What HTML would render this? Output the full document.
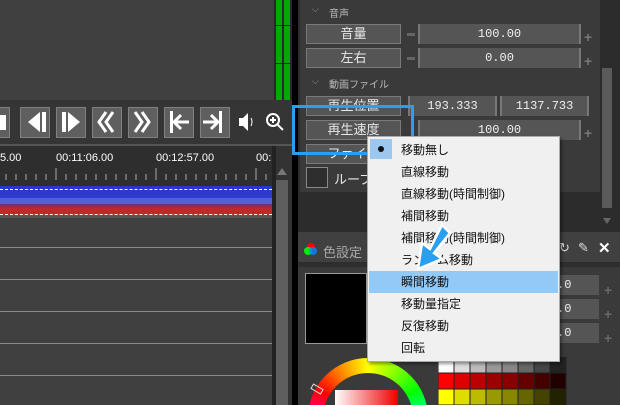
<!DOCTYPE html>
<html style="overflow:hidden;height:405px"><head><meta charset="utf-8"><style>
*{margin:0;padding:0;box-sizing:border-box}
html,body{width:620px;height:405px;overflow:hidden}
body{background:#404040;font-family:"Liberation Sans","Noto Sans CJK JP",sans-serif}
#w{position:relative;width:620px;height:405px;overflow:hidden;background:#404040}
.a{position:absolute}
.btn{position:absolute;width:30px;height:31px;background:#5f5f5f;border:1px solid #808080;top:107px}
.lbl{position:absolute;background:#555;border:1px solid #7a7a7a;color:#e8e8e8;font-size:13px;text-align:center;line-height:18px;height:20px}
.val{position:absolute;background:#555;color:#f0f0f0;font-family:"Liberation Mono",monospace;font-size:12px;text-align:center;line-height:20px;height:20px;border-left:2px solid #777;border-right:2px solid #777}
.mi{position:absolute;left:33px;font-size:12px;color:#111;height:22px;line-height:22px}
.h{position:absolute;color:#bbb;font-size:10px}
</style></head><body><div id="w">
<div class="a" style="left:274px;top:0;width:18px;height:100px;background:#2a2a2a"></div>
<div class="a" style="left:276px;top:0;width:6px;height:100px;background:#0a0"></div>
<div class="a" style="left:284px;top:0;width:6px;height:100px;background:#0a0"></div>
<div class="a" style="left:276px;top:25px;width:14px;height:1px;background:#222"></div>
<div class="a" style="left:276px;top:63px;width:14px;height:1px;background:#222"></div>
<div class="a" style="left:292px;top:0;width:6px;height:405px;background:#000"></div>
<div class="a" style="left:0;top:100px;width:292px;height:46px;background:#353535"></div>
<div class="a" style="left:0;top:144px;width:292px;height:2px;background:#555"></div>
<div class="btn" style="left:-20px"></div>
<div class="a" style="left:0;top:115px;width:6px;height:15px;background:#fff"></div>
<div class="btn" style="left:20px"></div><div class="btn" style="left:56px"></div><div class="btn" style="left:92px"></div><div class="btn" style="left:128px"></div><div class="btn" style="left:164px"></div><div class="btn" style="left:200px"></div>
<svg class="a" style="left:0;top:100px" width="292" height="46">
<g fill="#fff" stroke="#fff">
<polygon points="28,22 40,12 40,32" stroke="none"/><rect x="42" y="12" width="4" height="20" stroke="none"/>
<rect x="62" y="12" width="4" height="20" stroke="none"/><polygon points="68,12 80,22 68,32" stroke="none"/>
<path d="M106,12 L99,22 L106,32 M113,12 L106,22 L113,32" fill="none" stroke-width="3"/>
<path d="M135,12 L142,22 L135,32 M142,12 L149,22 L142,32" fill="none" stroke-width="3"/>
<rect x="170" y="11" width="3" height="22" stroke="none"/><path d="M175,22 H189 M181,15 L174,22 L181,29" fill="none" stroke-width="3"/>
<rect x="219" y="11" width="3" height="22" stroke="none"/><path d="M203,22 H217 M211,15 L218,22 L211,29" fill="none" stroke-width="3"/>
<polygon points="239,18 243,18 248,13 248,31 243,26 239,26" stroke="none"/>
<path d="M251,18 Q253,22 251,26" fill="none" stroke-width="1"/>
<circle cx="273" cy="20" r="6" fill="none" stroke-width="2"/><path d="M277,24 L283,30 M270,20 H276 M273,17 V23" fill="none" stroke-width="2"/>
</g></svg>
<div class="a" style="left:0;top:146px;width:272px;height:40px;background:#2e2e2e"></div>
<div class="a" style="left:0;top:152px;color:#fff;font-size:11px;width:272px;white-space:nowrap">
<span class="a" style="left:0">5.00</span><span class="a" style="left:56px">00:11:06.00</span><span class="a" style="left:156px">00:12:57.00</span><span class="a" style="left:256px">00:</span></div>
<svg class="a" style="left:0;top:168px" width="272" height="18"><g stroke="#aaa">
<path d="M56,0V12 M156,0V12 M256,0V12 M6,6V12 M16,6V12 M26,6V12 M36,6V12 M46,6V12 M66,6V12 M76,6V12 M86,6V12 M96,6V12 M106,6V12 M116,6V12 M126,6V12 M136,6V12 M146,6V12 M166,6V12 M176,6V12 M186,6V12 M196,6V12 M206,6V12 M216,6V12 M226,6V12 M236,6V12 M246,6V12 M266,6V12"/></g></svg>
<div class="a" style="left:0;top:186px;width:272px;height:30px;background:linear-gradient(#2b36c8 0,#3040d0 55%,#8a2a5a 65%,#c0282a 75%,#c02a2a 100%)"></div>
<div class="a" style="left:0;top:198px;width:272px;height:6px;background:rgba(120,130,220,.5)"></div>
<div class="a" style="left:0;top:189px;width:272px;border-top:1px dashed #fff"></div>
<div class="a" style="left:0;top:214px;width:272px;border-top:1px dashed #fff"></div>
<div class="a" style="left:0;top:216px;width:272px;height:2px;background:#555"></div>
<div class="a" style="left:0;top:247px;width:272px;height:1px;background:#8a8a8a"></div>
<div class="a" style="left:0;top:279px;width:272px;height:1px;background:#8a8a8a"></div>
<div class="a" style="left:0;top:311px;width:272px;height:1px;background:#8a8a8a"></div>
<div class="a" style="left:0;top:343px;width:272px;height:1px;background:#8a8a8a"></div>
<div class="a" style="left:0;top:375px;width:272px;height:1px;background:#8a8a8a"></div>
<div class="a" style="left:272px;top:146px;width:4px;height:259px;background:#222"></div>
<div class="a" style="left:276px;top:146px;width:12px;height:259px;background:#5e5e5e"></div>
<div class="a" style="left:276px;top:146px;width:12px;height:34px;background:#333"></div>
<div class="a" style="left:277px;top:168px;width:0;height:0;border:5px solid transparent;border-bottom:7px solid #777;border-top:0"></div>
<div class="a" style="left:288px;top:146px;width:4px;height:259px;background:#333"></div>
<div class="a" style="left:298px;top:0;width:322px;height:232px;background:#2c2c2c"></div>
<div class="a" style="left:300px;top:0;width:300px;height:192px;background:#3a3a3a"></div>
<div class="a" style="left:602px;top:68px;width:10px;height:140px;background:#5a5a5a"></div>
<div class="a" style="left:603px;top:218px;width:0;height:0;border:4px solid transparent;border-top:6px solid #666"></div>
<div class="h" style="left:312px;top:4px;font-size:9px;color:#999">⌵</div><div class="h" style="left:329px;top:5px">音声</div>
<div class="lbl" style="left:306px;top:24px;width:95px">音量</div>
<div class="a" style="left:407px;top:33px;width:8px;height:3px;background:#666"></div>
<div class="val" style="left:418px;top:24px;width:163px">100.00</div>
<div class="a" style="left:584px;top:29px;color:#777;font-size:14px;font-weight:bold">+</div>
<div class="lbl" style="left:306px;top:48px;width:95px">左右</div>
<div class="a" style="left:407px;top:57px;width:8px;height:3px;background:#666"></div>
<div class="val" style="left:418px;top:48px;width:163px">0.00</div>
<div class="a" style="left:584px;top:53px;color:#777;font-size:14px;font-weight:bold">+</div>
<div class="h" style="left:312px;top:76px;font-size:9px;color:#999">⌵</div><div class="h" style="left:329px;top:76px">動画ファイル</div>
<div class="lbl" style="left:306px;top:96px;width:95px">再生位置</div>
<div class="val" style="left:408px;top:96px;width:89px">193.333</div>
<div class="val" style="left:500px;top:96px;width:89px">1137.733</div>
<div class="lbl" style="left:306px;top:120px;width:95px">再生速度</div>
<div class="val" style="left:418px;top:120px;width:163px">100.00</div>
<div class="a" style="left:584px;top:125px;color:#777;font-size:14px;font-weight:bold">+</div>
<div class="lbl" style="left:306px;top:144px;width:95px">ファイル</div>
<div class="a" style="left:306px;top:167px;width:22px;height:21px;border:1px solid #888;background:#2e2e2e"></div>
<div class="a" style="left:334px;top:169px;color:#e8e8e8;font-size:13px">ループ</div>
<div class="a" style="left:298px;top:238px;width:322px;height:167px;background:#3a3a3a"></div>
<div class="a" style="left:298px;top:238px;width:322px;height:24px;background:#404040"></div>
<div class="a" style="left:298px;top:262px;width:322px;height:5px;background:#2e2e2e"></div>
<div class="a" style="left:307px;top:243px;width:8px;height:8px;border-radius:50%;background:#f00"></div>
<div class="a" style="left:304px;top:247px;width:8px;height:8px;border-radius:50%;background:#0f0;opacity:.9"></div>
<div class="a" style="left:309px;top:247px;width:8px;height:8px;border-radius:50%;background:#08f;opacity:.8"></div>
<div class="a" style="left:323px;top:242px;color:#aaa;font-size:13px">色設定</div>
<div class="a" style="left:559px;top:240px;color:#ddd;font-size:13px">↻</div>
<div class="a" style="left:578px;top:240px;color:#ddd;font-size:13px">✎</div>
<div class="a" style="left:598px;top:239px;color:#fff;font-size:15px;font-weight:bold">✕</div>
<div class="a" style="left:305px;top:273px;width:62px;height:71px;background:#000;border:1px solid #999"></div>
<div class="val" style="left:557px;top:275px;width:42px;border:none;text-align:left;background:#555">.0</div>
<div class="val" style="left:557px;top:299px;width:42px;border:none;text-align:left;background:#555">.0</div>
<div class="val" style="left:557px;top:323px;width:42px;border:none;text-align:left;background:#555">.0</div>
<div class="a" style="left:604px;top:278px;color:#666;font-size:14px;font-weight:bold;line-height:24px">+<br>+<br>+</div>
<div class="a" style="left:308px;top:358px;width:120px;height:120px;border-radius:50%;background:conic-gradient(from 0deg,#ff0,#8f0,#0f0,#0fa,#0ff,#08f,#00f,#80f,#f0f,#f08,#f00,#f80,#ff0)"></div>
<div class="a" style="left:323px;top:373px;width:90px;height:90px;border-radius:50%;background:#3a3a3a"></div>
<div class="a" style="left:335px;top:390px;width:63px;height:15px;background:linear-gradient(90deg,#fff,#e00)"></div>
<div class="a" style="left:311px;top:386px;width:12px;height:6px;border:1px solid #ddd;transform:rotate(30deg)"></div>
<svg class="a" style="left:438px;top:357px" width="132" height="48">
<g stroke="#222">
<rect x="0" y="0" width="16" height="16" fill="#fff"/><rect x="16" y="0" width="16" height="16" fill="#ddd"/><rect x="32" y="0" width="16" height="16" fill="#bbb"/><rect x="48" y="0" width="16" height="16" fill="#999"/><rect x="64" y="0" width="16" height="16" fill="#888"/><rect x="80" y="0" width="16" height="16" fill="#666"/><rect x="96" y="0" width="16" height="16" fill="#444"/><rect x="112" y="0" width="16" height="16" fill="#222"/>
<rect x="0" y="16" width="16" height="16" fill="#f00"/><rect x="16" y="16" width="16" height="16" fill="#d00"/><rect x="32" y="16" width="16" height="16" fill="#b00"/><rect x="48" y="16" width="16" height="16" fill="#900"/><rect x="64" y="16" width="16" height="16" fill="#800"/><rect x="80" y="16" width="16" height="16" fill="#600"/><rect x="96" y="16" width="16" height="16" fill="#400"/><rect x="112" y="16" width="16" height="16" fill="#200"/>
<rect x="0" y="32" width="16" height="16" fill="#ff0"/><rect x="16" y="32" width="16" height="16" fill="#dd0"/><rect x="32" y="32" width="16" height="16" fill="#bb0"/><rect x="48" y="32" width="16" height="16" fill="#990"/><rect x="64" y="32" width="16" height="16" fill="#880"/><rect x="80" y="32" width="16" height="16" fill="#660"/><rect x="96" y="32" width="16" height="16" fill="#440"/><rect x="112" y="32" width="16" height="16" fill="#220"/>
</g></svg>
<div class="a" style="left:292px;top:105px;width:122px;height:50px;border:3px solid #2a9ff0"></div>
<div class="a" style="left:367px;top:136px;width:193px;height:226px;background:#f0f0f0;border:1px solid #aaa;box-shadow:2px 2px 3px rgba(0,0,0,.4)">
<div class="a" style="left:2px;top:2px;width:22px;height:20px;background:#9cc8f0"></div>
<div class="a" style="left:10px;top:9px;width:6px;height:6px;border-radius:50%;background:#111"></div>
<div class="a" style="left:1px;top:134px;width:189px;height:22px;background:#91c9f7"></div>
<div class="mi" style="top:2px">移動無し</div>
<div class="mi" style="top:24px">直線移動</div>
<div class="mi" style="top:46px">直線移動(時間制御)</div>
<div class="mi" style="top:68px">補間移動</div>
<div class="mi" style="top:90px">補間移動(時間制御)</div>
<div class="mi" style="top:112px">ランダム移動</div>
<div class="mi" style="top:134px">瞬間移動</div>
<div class="mi" style="top:156px">移動量指定</div>
<div class="mi" style="top:178px">反復移動</div>
<div class="mi" style="top:200px">回転</div>
</div>
<svg class="a" style="left:400px;top:215px" width="60" height="60">
<polygon points="42,10 50,18 34,38 42,44 18,54 22,28 30,34" fill="#2a9ff0" stroke="#fff" stroke-width="2.5"/>
</svg>
</div></body></html>
